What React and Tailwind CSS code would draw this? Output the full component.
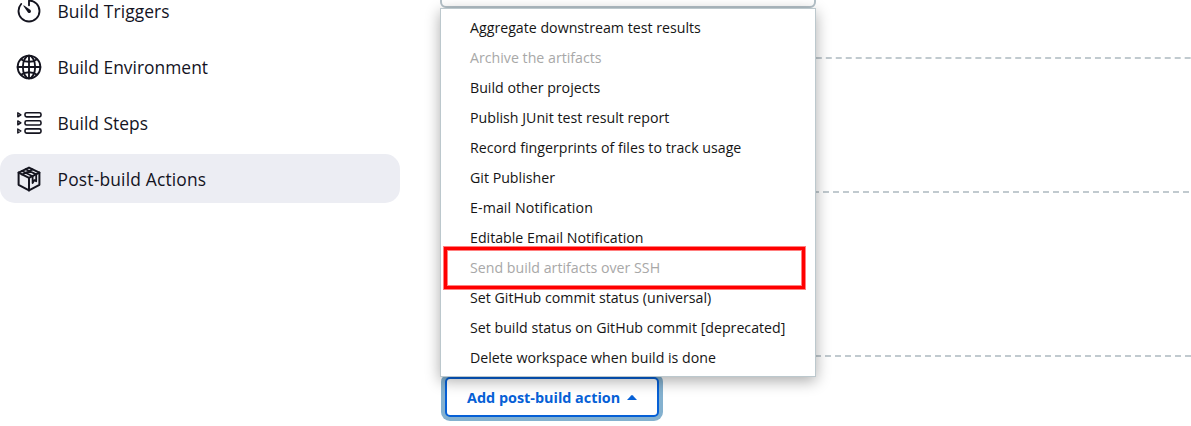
const stroke = {
  fill: "none",
  stroke: "currentColor",
  strokeLinecap: "round",
  strokeLinejoin: "round",
};

function TimerIcon() {
  return (
    <svg viewBox="0 0 512 512" className="size-7">
      <path {...stroke} strokeWidth="34" d="M112.91 128A191.85 191.85 0 0064 254c-1.18 106.35 85.65 193.8 192 194 106.2.2 192-85.83 192-192 0-104.54-83.55-189.61-187.5-192a4.36 4.36 0 00-4.5 4.37V152" />
      <path fill="currentColor" d="M233.38 278.63l-79-113a8.13 8.13 0 0111.32-11.32l113 79a32.5 32.5 0 01-37.25 53.26 33.21 33.21 0 01-8.07-7.94z" />
    </svg>
  );
}

function GlobeIcon() {
  return (
    <svg viewBox="0 0 512 512" className="size-7" {...stroke} strokeWidth="34">
      <path d="M256 48C141.13 48 48 141.13 48 256s93.13 208 208 208 208-93.13 208-208S370.87 48 256 48z" />
      <path d="M256 48c-58.07 0-112.67 93.13-112.67 208S197.93 464 256 464s112.67-93.13 112.67-208S314.07 48 256 48z" />
      <path d="M117.33 117.33c38.24 27.15 86.38 43.34 138.67 43.34s100.43-16.19 138.67-43.34M394.67 394.67c-38.24-27.15-86.38-43.34-138.67-43.34s-100.43 16.19-138.67 43.34" />
      <path d="M256 48v416M464 256H48" />
    </svg>
  );
}

function StepsIcon() {
  return (
    <svg viewBox="0 0 28 28" className="size-7" {...stroke} strokeWidth="1.6">
      {[5.8, 13.9, 22].map((y) => (
        <g key={y}>
          <path strokeWidth="1.4" d={`M2.8 ${y - 2}v4L5.9 ${y}z`} />
          <rect x="10" y={y - 2.1} width="16" height="4.2" rx="1.6" />
        </g>
      ))}
    </svg>
  );
}

function PackageIcon() {
  return (
    <svg viewBox="0 0 28 28" className="size-7" {...stroke} strokeWidth="2">
      <path d="M14 2.6 3.6 7.6v12.2L14 25.4l10.4-5.6V7.6z" />
      <path d="M3.6 7.6 14 12.9l10.4-5.3M14 12.9v12.5" />
      <path strokeWidth="1.8" d="M10.6 4.3 21.2 9.4v6.9l-1.8-1.2-1.8 3v-6.9L7 6M17.6 4.4 7.2 9.5" />
    </svg>
  );
}

const sections = [
  { label: "Build Triggers", Icon: TimerIcon, track: "tracking-[0.08px]" },
  { label: "Build Environment", Icon: GlobeIcon, track: "tracking-[0.02px]" },
  { label: "Build Steps", Icon: StepsIcon, track: "tracking-[0.03px]" },
  { label: "Post-build Actions", Icon: PackageIcon, track: "tracking-[0.18px]", active: true },
];

const actions = [
  { label: "Aggregate downstream test results" },
  { label: "Archive the artifacts", disabled: true },
  { label: "Build other projects" },
  { label: "Publish JUnit test result report" },
  { label: "Record fingerprints of files to track usage" },
  { label: "Git Publisher" },
  { label: "E-mail Notification", wide: true },
  { label: "Editable Email Notification" },
  { label: "Send build artifacts over SSH", disabled: true, marked: true },
  { label: "Set GitHub commit status (universal)" },
  { label: "Set build status on GitHub commit [deprecated]" },
  { label: "Delete workspace when build is done" },
];

function Divider({ className }) {
  return (
    <div
      className={`h-[2px] shrink-0 bg-[linear-gradient(to_right,#c1cacf_6px,transparent_6px)] bg-repeat-x ${className}`}
    />
  );
}

export default function App() {
  return (
    <div className="flex h-[426px] overflow-hidden bg-white font-['Open_Sans','Noto_Sans',sans-serif]">
      <nav className="-mt-[14px] flex w-[400px] shrink-0 flex-col gap-[7px] text-[17.4px] text-[#14141f]">
        {sections.map(({ label, Icon, track, active }) => (
          <a
            key={label}
            className={`flex h-[49px] shrink-0 items-center gap-[14.5px] rounded-[15px] pt-px pl-[15px] ${active ? "bg-[#ecedf3]" : ""}`}
          >
            <Icon />
            <span className={`pb-px leading-[20px] whitespace-nowrap ${track}`}>{label}</span>
          </a>
        ))}
      </nav>

      <main className="relative ml-10 flex flex-1 flex-col">
        <Divider className="mt-[57px] bg-[length:9.98px_2px] bg-[position:7px_0]" />
        <Divider className="mt-[132px] bg-[length:10px_2px] bg-[position:3px_0]" />
        <Divider className="mt-[162px] bg-[length:10px_2px] bg-[position:5px_0]" />
        <button className="mt-[20px] ml-[5px] flex h-10 w-[214px] items-center gap-[7px] rounded-[5px] border-2 border-[#0660d6] bg-white pt-[2px] pl-5 text-[14.4px] font-bold text-[#0660d6] ring-4 ring-[#84b1cf]">
          <span className="whitespace-nowrap">Add post-build action</span>
          <svg viewBox="0 0 10 5" className="mb-[2px] h-[5px] w-[10px]">
            <path fill="currentColor" d="M0 5 4.2.5Q5-.3 5.8.5L10 5z" />
          </svg>
        </button>

        <div className="absolute top-0 left-0 flex w-[376px] flex-col">
          <div className="-mt-8 h-10 rounded-[6px] border-2 border-[#b4c1c8] bg-white" />
          <ul className="flex h-[369px] flex-col border border-[#bcc8cd] bg-white pt-[4px] text-[14.2px] text-[#151515] shadow-[0_4px_14px_rgba(0,0,0,0.33)]">
            {actions.map(({ label, disabled, marked, wide }) => (
              <li
                key={label}
                className={`relative flex h-[30px] shrink-0 items-center pl-[29px] whitespace-nowrap ${disabled ? "text-[#a8a8a8]" : ""} ${wide ? "tracking-[0.1px]" : ""}`}
              >
                {label}
                {marked && (
                  <span className="absolute -top-[6px] left-[3px] h-[42px] w-[361px] border-3 border-[#ff0000] shadow-[0_0_0_1px_rgba(255,0,0,0.5),inset_0_0_0_1px_rgba(255,0,0,0.5)]" />
                )}
              </li>
            ))}
          </ul>
        </div>
      </main>
    </div>
  );
}
